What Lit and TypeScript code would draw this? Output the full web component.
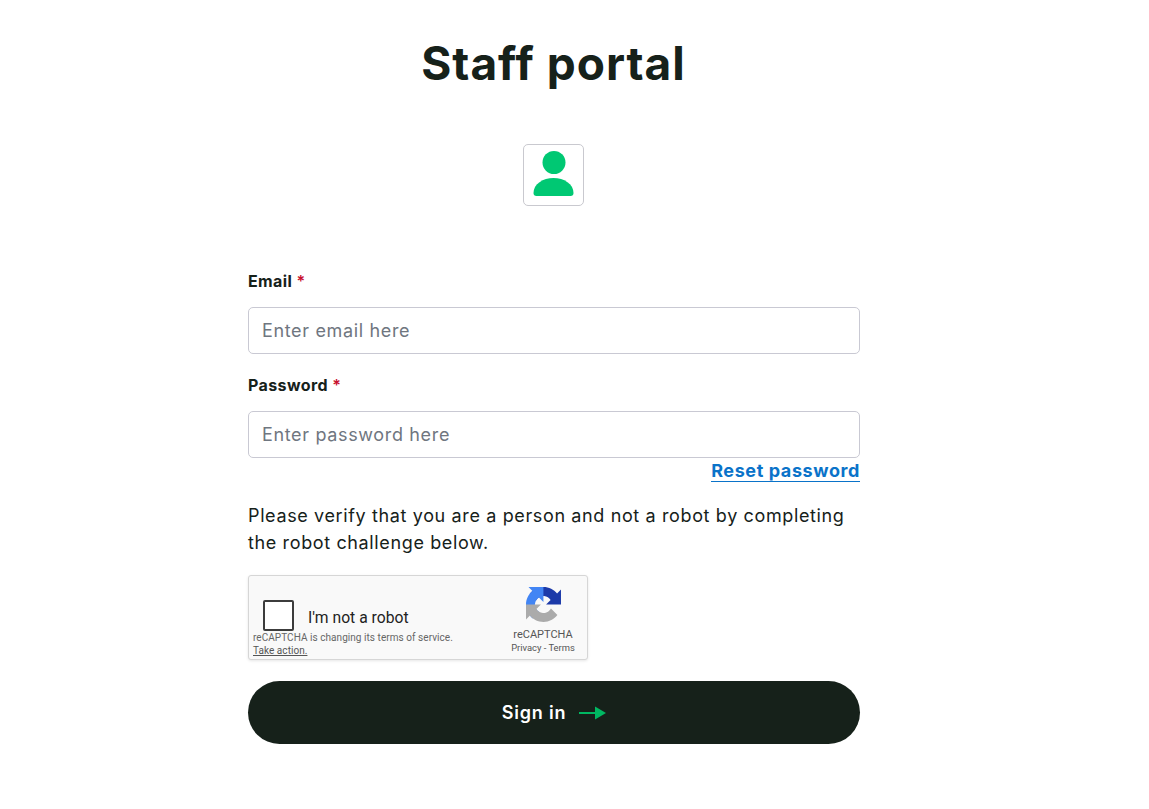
import { LitElement, html, css } from 'lit';
import { customElement } from 'lit/decorators.js';

@customElement('app-root')
export class AppRoot extends LitElement {
  static styles = css`
    :host {
      display: block;
      height: 809px;
      background: #fff;
      color: #16211a;
      font-family: Inter, "Open Sans", sans-serif;
      font-variant-ligatures: none;
      overflow: hidden;
    }
    .page {
      width: 612px;
      margin-left: 248px;
      display: flex;
      flex-direction: column;
    }
    h1 {
      margin: 35px 1px 0 0;
      font-size: 46px;
      line-height: 56px;
      font-weight: 700;
      text-align: center;
      letter-spacing: 1px;
    }
    .avatar {
      align-self: center;
      margin-top: 53px;
      margin-left: -1px;
      width: 59px;
      height: 60px;
      border: 1px solid #c9c9cf;
      border-radius: 5px;
      display: flex;
      align-items: center;
      justify-content: center;
    }
    .avatar svg { display: block; }
    form { margin-top: 64px; display: flex; flex-direction: column; }
    label {
      font-size: 16px;
      line-height: 22px;
      font-weight: 700;
      letter-spacing: 0.4px;
    }
    label span { color: #c8102e; font-weight: 600; }
    .field {
      margin-top: 15px;
      height: 47px;
      box-sizing: border-box;
      border: 1px solid #c9c9d3;
      border-radius: 5px;
      padding: 0 13px 1px;
      display: flex;
      align-items: center;
      font-size: 18px;
      color: #6f7680;
      letter-spacing: 0.65px;
    }
    .field + label { margin-top: 20px; }
    .reset-row { display: flex; justify-content: flex-end; margin-top: 2px; }
    .reset {
      color: #0a73c9;
      font-size: 18px;
      font-weight: 700;
      line-height: 21px;
      letter-spacing: 0.6px;
      border-bottom: 1px solid #0a73c9;
      text-decoration: none;
    }
    p {
      margin: 20px 0 0;
      font-size: 18px;
      line-height: 27px;
      letter-spacing: 0.63px;
      font-weight: 400;
    }
    .captcha {
      margin-top: 19px;
      width: 340px;
      height: 85px;
      box-sizing: border-box;
      background: #f9f9f9;
      border: 1px solid #d6d6d6;
      border-radius: 3px;
      box-shadow: 0 1px 3px rgba(0, 0, 0, 0.1);
      font-family: Roboto, sans-serif;
      display: grid;
      grid-template-columns: 1fr 86px;
      padding: 0 1px 0 4px;
    }
    .captcha-main { display: flex; flex-direction: column; }
    .check-row { display: flex; align-items: center; margin: 23px 0 0 10px; height: 32px; }
    .box {
      width: 31px;
      height: 31px;
      box-sizing: border-box;
      background: #fff;
      border: 2px solid #3c3c3c;
      border-radius: 2px;
    }
    .robot { margin-left: 14px; font-size: 15.7px; color: #222; padding-top: 5px; }
    .terms { font-size: 10px; line-height: 13px; color: #666; letter-spacing: 0.05px; }
    .terms u { display: block; color: #555; }
    .brand { display: flex; flex-direction: column; align-items: center; padding-top: 11px; }
    .brand svg { display: block; }
    .brand .name { font-size: 11px; line-height: 13px; color: #555; margin-top: 6px; }
    .brand .links { font-size: 9.4px; line-height: 13px; color: #555; }
    .submit {
      margin-top: 21px;
      height: 63px;
      border-radius: 32px;
      background: #16211a;
      color: #fff;
      display: flex;
      align-items: center;
      justify-content: center;
      gap: 13px;
      font-size: 18px;
      font-weight: 600;
      letter-spacing: 0.8px;
    }
    .submit svg { display: block; }
  `;

  render() {
    return html`
      <div class="page">
        <h1>Staff portal</h1>
        <div class="avatar">
          <svg width="42" height="48" viewBox="0 0 42 48">
            <circle cx="21" cy="11.5" r="11.5" fill="#00c873"></circle>
            <path d="M3.5 45 Q.5 45 .5 42 C.5 33 10 27 20.5 27 C31 27 40.5 33 40.5 42 Q40.5 45 37.5 45 Z" fill="#00c873"></path>
          </svg>
        </div>
        <form>
          <label>Email <span>*</span></label>
          <div class="field">Enter email here</div>
          <label>Password <span>*</span></label>
          <div class="field">Enter password here</div>
          <div class="reset-row"><a class="reset" href="#">Reset password</a></div>
          <p>Please verify that you are a person and not a robot by completing the robot challenge below.</p>
          <div class="captcha">
            <div class="captcha-main">
              <div class="check-row">
                <div class="box"></div>
                <span class="robot">I'm not a robot</span>
              </div>
              <div class="terms">reCAPTCHA is changing its terms of service.<u>Take action.</u></div>
            </div>
            <div class="brand">
              <svg width="35" height="35" viewBox="0 0 64 64">
                <path d="M64 31.955l-.033-1.37V4.687l-7.16 7.16C50.948 4.674 42.033.093 32.05.093c-10.4 0-19.622 4.96-25.458 12.64l11.736 11.86a15.55 15.55 0 0 1 4.754-5.334c2.05-1.6 4.952-2.906 8.968-2.906.485 0 .86.057 1.135.163 4.976.393 9.288 3.14 11.828 7.124l-8.307 8.307 26.2.001" fill="#1c3aa9"></path>
                <path d="M31.862.094l-1.37.033H4.594l7.16 7.16C4.58 13.147 0 22.06 0 32.045c0 10.4 4.96 19.622 12.64 25.458l11.86-11.736a15.55 15.55 0 0 1-5.334-4.754c-1.6-2.05-2.906-4.952-2.906-8.968 0-.485.057-.86.163-1.135.393-4.976 3.14-9.288 7.124-11.828l8.307 8.307.001-26.2" fill="#4285f4"></path>
                <path d="M.001 32.045l.033 1.37v25.898l7.16-7.16c5.86 7.173 14.774 11.754 24.76 11.754 10.4 0 19.622-4.96 25.458-12.64l-11.736-11.86a15.55 15.55 0 0 1-4.754 5.334c-2.05 1.6-4.952 2.906-8.968 2.906-.485 0-.86-.057-1.135-.163-4.976-.393-9.288-3.14-11.828-7.124l8.307-8.307-26.2-.001" fill="#ababab"></path>
              </svg>
              <div class="name">reCAPTCHA</div>
              <div class="links">Privacy - Terms</div>
            </div>
          </div>
          <div class="submit">
            <span>Sign in</span>
            <svg width="27" height="14" viewBox="0 0 27 14">
              <path d="M0 7 H17" stroke="#00b862" stroke-width="2" fill="none"></path>
              <path d="M16 0.5 L27 7 L16 13.5 Z" fill="#00b862"></path>
            </svg>
          </div>
        </form>
      </div>
    `;
  }
}
